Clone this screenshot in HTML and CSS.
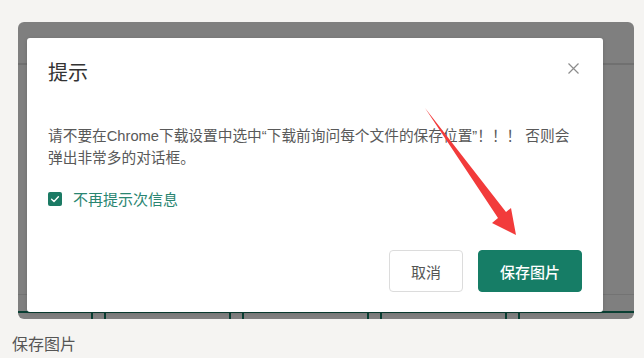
FILE: index.html
```html
<!DOCTYPE html>
<html lang="zh-CN">
<head>
<meta charset="utf-8">
<title>提示</title>
<link rel="stylesheet" href="styles.css">
</head>
<body>
<div class="stage">
  <div class="panel">
    <div class="under">
      <div class="under-head"></div>
      <div class="under-body"></div>
      <div class="under-gap"></div>
      <div class="under-row">
        <div class="card"></div>
        <div class="card"></div>
        <div class="card"></div>
        <div class="card"></div>
        <div class="card"></div>
      </div>
    </div>
    <div class="mask"></div>
    <div class="dialog">
      <div class="dialog-head">
        <div class="dialog-title">提示</div>
        <svg class="close" width="11" height="11" viewBox="0 0 11 11">
          <path d="M0.5 0.5 L10.5 10.5 M10.5 0.5 L0.5 10.5" stroke="#8c8c8c" stroke-width="1.2" fill="none"/>
        </svg>
      </div>
      <div class="dialog-body">请不要在Chrome下载设置中选中“下载前询问每个文件的保存位置”！！！ 否则会弹出非常多的对话框。</div>
      <label class="check-row">
        <span class="check">
          <svg width="14" height="14" viewBox="0 0 14 14">
            <path d="M3.6 7.2 L6 9.5 L10.4 4.8" stroke="#fff" stroke-width="1.4" fill="none" stroke-linecap="round" stroke-linejoin="round"/>
          </svg>
        </span>
        <span class="check-label">不再提示次信息</span>
      </label>
      <div class="dialog-foot">
        <button class="btn btn-cancel">取消</button>
        <button class="btn btn-primary">保存图片</button>
      </div>
    </div>
  </div>
  <div class="caption">保存图片</div>
  <svg class="arrow" width="644" height="358" viewBox="0 0 644 358">
    <polygon points="425,108 506,212 511,208 516,235 492,223 498,218" fill="#f23b3b"/>
  </svg>
</div>
</body>
</html>
```

FILE: styles.css
```css
html, body {
  margin: 0;
  padding: 0;
}
body {
  background: #f5f4f2;
  font-family: "Noto Sans CJK SC", "Noto Sans", sans-serif;
  width: 644px;
  height: 358px;
  overflow: hidden;
}
.stage {
  position: relative;
  width: 644px;
  height: 358px;
  padding-top: 22px;
  box-sizing: border-box;
}
.panel {
  position: relative;
  margin-left: 18px;
  width: 616px;
  height: 297px;
  border-radius: 6px;
  overflow: hidden;
  background: #ffffff;
}
.under {
  display: flex;
  flex-direction: column;
  height: 100%;
}
.under-head {
  height: 41px;
  flex-shrink: 0;
  border-bottom: 2px solid #e0e0e0;
}
.under-body {
  height: 229px;
  flex-shrink: 0;
  border-bottom: 1px solid #e6e6e6;
}
.under-gap {
  height: 16px;
  flex-shrink: 0;
  border-bottom: 2px solid #157f66;
}
.under-row {
  flex: 1;
  display: flex;
  gap: 11px;
  margin-left: -52px;
}
.card {
  width: 127px;
  flex-shrink: 0;
  box-sizing: border-box;
  border-left: 2px solid #157f66;
  border-right: 2px solid #157f66;
}
.mask {
  position: absolute;
  inset: 0;
  background: rgba(0, 0, 0, 0.5);
}
.dialog {
  position: absolute;
  left: 9px;
  top: 16px;
  width: 576px;
  height: 274px;
  background: #fff;
  border-radius: 3px;
  box-shadow: 0 1px 4px rgba(0, 0, 0, 0.15);
  box-sizing: border-box;
  padding: 20px 21px 20px 21px;
  display: flex;
  flex-direction: column;
}
.dialog-head {
  display: flex;
  justify-content: space-between;
  align-items: flex-start;
  padding-right: 3px;
}
.dialog-title {
  font-size: 20px;
  line-height: 28px;
  color: #333;
}
.close {
  margin-top: 5px;
  display: block;
}
.dialog-body {
  margin-top: 39px;
  padding-right: 1px;
  font-family: "Liberation Sans", "Noto Sans CJK SC", sans-serif;
  font-size: 14.7px;
  line-height: 22px;
  color: #595959;
}
.check-row {
  margin-top: 19px;
  display: flex;
  align-items: center;
  height: 22px;
}
.check {
  width: 14px;
  height: 14px;
  border-radius: 2px;
  background: #1b7a64;
  display: block;
}
.check svg {
  display: block;
}
.check-label {
  margin-left: 11px;
  font-size: 15px;
  line-height: 22px;
  color: #2a8571;
}
.dialog-foot {
  margin-top: auto;
  display: flex;
  justify-content: flex-end;
  gap: 15px;
}
.btn {
  font-family: "Noto Sans CJK SC", "Noto Sans", sans-serif;
  font-size: 15px;
  height: 42px;
  border-radius: 4px;
  box-sizing: border-box;
  padding: 0;
  cursor: pointer;
}
.btn-cancel {
  width: 74px;
  background: #fff;
  border: 1px solid #dcdcdc;
  color: #555;
}
.btn-primary {
  width: 104px;
  background: #167d66;
  border: 1px solid #167d66;
  color: #fff;
  font-weight: 500;
}
.caption {
  margin-top: 13px;
  margin-left: 12px;
  font-size: 16px;
  line-height: 22px;
  color: #555;
}
.arrow {
  position: absolute;
  left: 0;
  top: 0;
  pointer-events: none;
}
```
